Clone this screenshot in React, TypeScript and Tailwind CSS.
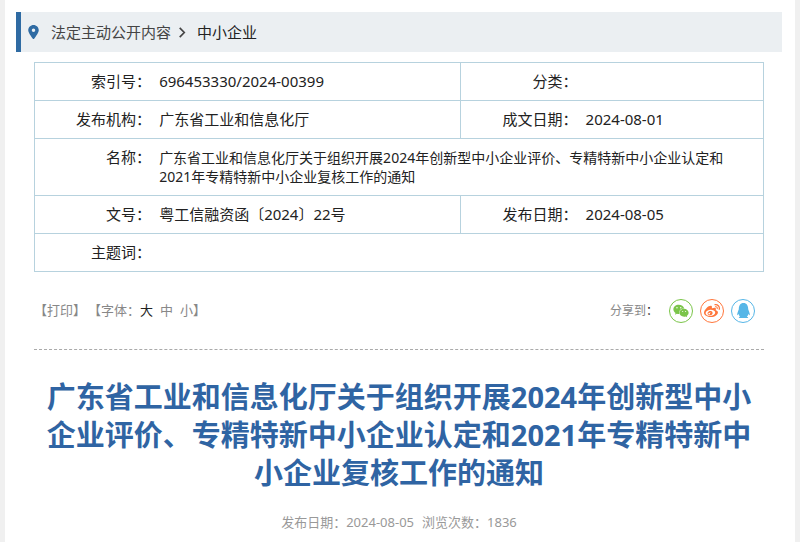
import type { ReactNode } from 'react'

import { useState } from 'react'
import { FaQq, FaWeibo, FaWeixin } from 'react-icons/fa'
import { FaLocationDot } from 'react-icons/fa6'

const fontSizes = ['大', '中', '小']

const Label = ({ children }: { children: ReactNode }) => (
  <th scope="row" className="border-y border-l border-[#b7d2de] py-[9px] text-right align-top font-normal">
    {children}：
  </th>
)

const Value = ({ children, span = 1 }: { children?: ReactNode; span?: number }) => (
  <td colSpan={span} className="border-y border-r border-[#b7d2de] py-[9px] pr-1 pl-2 align-top">
    {children}
  </td>
)

const Breadcrumb = () => (
  <nav className="flex h-10 items-center border-l-5 border-[#2f6ba3] bg-[#ebeff2] pl-[7px] text-[15px] text-[#444]">
    <FaLocationDot className="mr-3 h-[14px] w-[11px] text-[#2f6ba3]" />
    <a href="#open">法定主动公开内容</a>
    <svg viewBox="0 0 8 12" className="mx-[7px] h-[11px] w-[8px]" fill="none" stroke="currentColor" strokeWidth="1.8">
      <path d="M1.5 1 6.5 6l-5 5" />
    </svg>
    <a href="#sme" className="ml-1 text-[#222]">
      中小企业
    </a>
  </nav>
)

const DocumentInfo = () => (
  <table className="w-full table-fixed border-collapse text-[15px] leading-[19px] text-[#222]">
    <colgroup>
      <col className="w-[16%]" />
      <col className="w-[42.5%]" />
      <col className="w-[16%]" />
      <col />
    </colgroup>
    <tbody>
      <tr>
        <Label>索引号</Label>
        <Value>696453330/2024-00399</Value>
        <Label>分类</Label>
        <Value />
      </tr>
      <tr>
        <Label>发布机构</Label>
        <Value>广东省工业和信息化厅</Value>
        <Label>成文日期</Label>
        <Value>2024-08-01</Value>
      </tr>
      <tr>
        <Label>名称</Label>
        <Value span={3}>
          <p className="text-[14px] leading-[19px]">
            广东省工业和信息化厅关于组织开展2024年创新型中小企业评价、专精特新中小企业认定和
            <br />
            2021年专精特新中小企业复核工作的通知
          </p>
        </Value>
      </tr>
      <tr>
        <Label>文号</Label>
        <Value>粤工信融资函〔2024〕22号</Value>
        <Label>发布日期</Label>
        <Value>2024-08-05</Value>
      </tr>
      <tr>
        <Label>主题词</Label>
        <Value span={3} />
      </tr>
    </tbody>
  </table>
)

const Toolbar = () => {
  const [size, setSize] = useState('大')

  return (
    <div className="flex h-[78px] items-center justify-between border-b border-dashed border-[#aaa] pr-[9px] text-[#888]">
      <div className="flex items-center gap-0.5 text-[13px]">
        <button type="button">【打印】</button>
        <div className="flex items-center">
          <span>【字体：</span>
          <span className="flex gap-[7px]">
            {fontSizes.map(s => (
              <button key={s} type="button" onClick={() => setSize(s)} className={s === size ? 'text-[#222]' : ''}>
                {s}
              </button>
            ))}
          </span>
          <span>】</span>
        </div>
      </div>
      <div className="flex items-center gap-[7px] text-[12px]">
        <span className="mr-1">
          分享到<span className="text-[#222]">：</span>
        </span>
        <a
          href="#wechat"
          aria-label="微信"
          className="flex size-6 items-center justify-center rounded-full border border-[#7bc549] text-[#7bc549]"
        >
          <FaWeixin className="size-4" />
        </a>
        <a
          href="#weibo"
          aria-label="微博"
          className="flex size-6 items-center justify-center rounded-full border border-[#ff763b] text-[#ff763b]"
        >
          <FaWeibo className="size-4" />
        </a>
        <a
          href="#qq"
          aria-label="QQ"
          className="flex size-6 items-center justify-center rounded-full border border-[#56b6e7] text-[#56b6e7]"
        >
          <FaQq className="size-[15px]" />
        </a>
      </div>
    </div>
  )
}

const App = () => (
  <div className="min-h-screen bg-[#f0f0f0] px-[5px] font-['Noto_Sans','Noto_Sans_CJK_SC',sans-serif]">
    <main className="min-h-screen bg-white pt-3 pr-[13px] pl-[11px]">
      <Breadcrumb />
      <div className="mt-[10px] pr-[18px] pl-[18px]">
        <DocumentInfo />
        <Toolbar />
        <h1 className="mt-7 text-center text-[29px] leading-[38px] font-bold text-[#2f64a3]">
          广东省工业和信息化厅关于组织开展2024年创新型中小企业评价、专精特新中小企业认定和2021年专精特新中小企业复核工作的通知
        </h1>
        <p className="mt-5 flex justify-center gap-2 text-[13px] leading-5 text-[#999]">
          <span>发布日期：2024-08-05</span>
          <span>浏览次数：1836</span>
        </p>
      </div>
    </main>
  </div>
)

export default App
